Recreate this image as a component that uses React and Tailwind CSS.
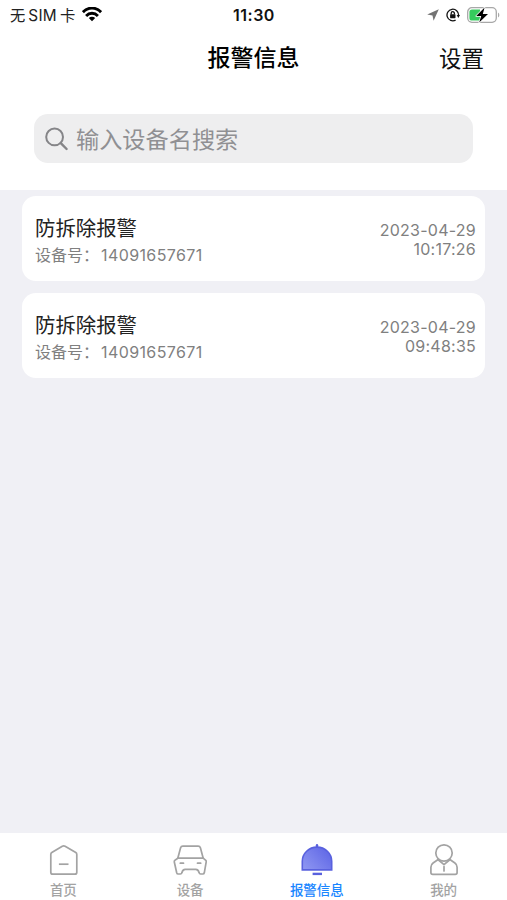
import React from 'react';
import { clsx } from 'clsx';

const WifiIcon = () => (
  <svg width="20" height="15" viewBox="0 0 20 15" fill="none" stroke="#000" strokeWidth="2.9">
    <path d="M0.9 5.2C6 -0.3 14 -0.3 19.1 5.2" />
    <path d="M4.1 8.9C7.4 5.4 12.6 5.4 15.9 8.9" />
    <path d="M6.8 11.1C8.7 9.3 11.3 9.3 13.2 11.1L10 14.3Z" fill="#000" stroke="none" />
  </svg>
);

const LocationIcon = () => (
  <svg width="12" height="12" viewBox="0 0 12 12" fill="#737373">
    <path d="M11.8 0.2L0.2 5.4L5.5 6.5L6.6 11.8Z" />
  </svg>
);

const RotationLockIcon = () => (
  <svg width="14" height="14" viewBox="0 0 14 14" fill="none" stroke="#111" strokeWidth="1.3">
    <path d="M9.6 12.1A5.8 5.8 0 1 1 12.6 7.2" />
    <path d="M10.7 7H14L12.3 9.9Z" fill="#111" stroke="none" />
    <rect x="4.1" y="6.2" width="5.4" height="4" rx="0.6" fill="#111" stroke="none" />
    <path d="M5.2 6.5V5.3A1.6 1.6 0 0 1 8.4 5.3V6.5" />
  </svg>
);

const BatteryIcon = () => (
  <svg width="33" height="18" viewBox="0 0 33 18">
    <rect x="0.7" y="1.7" width="28.6" height="14.6" rx="4.2" fill="#fff" stroke="#a8a8a8" strokeWidth="1.3" />
    <path d="M31 6.5C32.8 7.4 32.8 10.6 31 11.5Z" fill="#a8a8a8" />
    <path d="M5 3.4H13V14.6H5A2.6 2.6 0 0 1 2.4 12V6A2.6 2.6 0 0 1 5 3.4Z" fill="#35cb5d" />
    <path
      d="M17.6 1.6L9.2 10H14.2L12.2 16.6L21 8H15.8Z"
      fill="#000"
      stroke="#fff"
      strokeWidth="1.4"
      strokeLinejoin="round"
      paintOrder="stroke"
    />
  </svg>
);

const SearchIcon = () => (
  <svg width="24" height="24" viewBox="0 0 24 24" fill="none" stroke="#858588" strokeWidth="2" strokeLinecap="round">
    <circle cx="9.6" cy="9.9" r="8.4" />
    <path d="M15.8 16.1L21.6 22" strokeWidth="2.4" />
  </svg>
);

const HomeIcon = () => (
  <svg width="34" height="34" viewBox="0 0 34 34" fill="none" stroke="#a3a3a3" strokeWidth="1.7" strokeLinejoin="round">
    <path d="M16.3 3.2Q17.7 2.4 19.1 3.2L29.8 9.6Q30.8 10.2 30.8 11.5V29.2Q30.8 31.2 28.8 31.2H6.8Q4.8 31.2 4.8 29.2V11.5Q4.8 10.2 5.8 9.6Z" />
    <path d="M12.9 21.2H22.5" />
  </svg>
);

const CarIcon = () => (
  <svg width="34" height="34" viewBox="0 0 34 34" fill="none" stroke="#a3a3a3" strokeWidth="1.7" strokeLinejoin="round" strokeLinecap="round">
    <path d="M4.8 15.2L7.6 4.8Q8.1 3.2 9.8 3.2H25.2Q26.9 3.2 27.4 4.8L30.2 15.2Z" />
    <path d="M4.8 15.2L1.8 17.4Q1.2 18 1.3 19L3.7 29.8Q4 31 5.2 31H7.4Q8.5 31 8.9 29.8Q9.6 26.3 12.2 26.3H22.8Q25.4 26.3 26.1 29.8Q26.5 31 27.6 31H29.8Q31 31 31.3 29.8L33.2 19Q33.4 18 32.8 17.4L30.2 15.2" />
    <path d="M7.3 20.2H10.5M24.5 20.2H27.7" />
  </svg>
);

const BellIcon = () => (
  <svg width="34" height="34" viewBox="0 0 34 34" fill="none">
    <defs>
      <linearGradient id="bell" x1="4" y1="28" x2="28" y2="6" gradientUnits="userSpaceOnUse">
        <stop stopColor="#9098f2" />
        <stop offset="1" stopColor="#6068e6" />
      </linearGradient>
    </defs>
    <path d="M17 2.2V5" stroke="#5961de" strokeWidth="2.4" strokeLinecap="round" />
    <path d="M2.3 26.9V18.3A14.7 14.2 0 0 1 31.7 18.3V26.9Z" fill="url(#bell)" stroke="#5961de" strokeWidth="1.6" />
    <path d="M12.6 30.9H22" stroke="#5961de" strokeWidth="2.4" />
  </svg>
);

const UserIcon = () => (
  <svg width="34" height="34" viewBox="0 0 34 34" fill="none" stroke="#a3a3a3" strokeWidth="1.7" strokeLinejoin="round" strokeLinecap="round">
    <circle cx="17" cy="10" r="8.2" />
    <path d="M11.5 16.3L6.1 20Q3.9 21.6 3.9 24.2V29.4Q3.9 31.3 5.8 31.3H28.2Q30.1 31.3 30.1 29.4V24.2Q30.1 21.6 27.9 20L22.5 16.3" />
    <path d="M11.5 17L17 21.6L22.5 17M17 23.5V28" />
  </svg>
);

const alarms = [
  { id: 1, title: '防拆除报警', device: '14091657671', date: '2023-04-29', time: '10:17:26' },
  { id: 2, title: '防拆除报警', device: '14091657671', date: '2023-04-29', time: '09:48:35' }
];

const tabs = [
  { id: 'home', label: '首页', icon: HomeIcon },
  { id: 'devices', label: '设备', icon: CarIcon },
  { id: 'alarms', label: '报警信息', icon: BellIcon },
  { id: 'mine', label: '我的', icon: UserIcon }
];

const StatusBar = () => (
  <div className="grid h-[30px] grid-cols-3 items-center pr-[7px] pl-[10px]">
    <div className="flex items-center gap-[7px]">
      <span className="pt-px text-[15.3px] leading-none whitespace-nowrap text-[#222]">
        无<span className="mx-[3px] tracking-[0.3px]">SIM</span>卡
      </span>
      <WifiIcon />
    </div>
    <span className="pr-[2px] text-center text-[16px] font-semibold tracking-[0.5px] text-[#111]">11:30</span>
    <div className="flex items-center justify-end gap-[7px]">
      <LocationIcon />
      <RotationLockIcon />
      <BatteryIcon />
    </div>
  </div>
);

const AlarmCard = ({ alarm }) => (
  <div className="flex h-[85px] items-center justify-between rounded-[14px] bg-white pr-[9px] pl-[13px]">
    <div className="pt-[5px]">
      <p className="text-[20.4px] leading-[28px] text-[#222]">{alarm.title}</p>
      <p className="flex text-[16px] leading-[25px] text-[#808080]">
        <span className="w-[66px]">设备号：</span>
        <span className="tracking-[0.4px]">{alarm.device}</span>
      </p>
    </div>
    <div className="pt-[2px] text-right text-[16px] leading-[19px] tracking-[0.25px] text-[#808080]">
      <p>{alarm.date}</p>
      <p>{alarm.time}</p>
    </div>
  </div>
);

const App = () => {
  const activeTab = 'alarms';

  return (
    <div className="flex h-[900px] w-full flex-col bg-[#f0f0f5] font-['Inter','Noto_Sans_CJK_SC',sans-serif]">
      {/* Header */}
      <header className="h-[190px] bg-white">
        <StatusBar />
        <div className="grid h-[54px] grid-cols-[1fr_auto_1fr] items-center px-[23px] pt-[3px]">
          <h1 className="col-start-2 text-[23px] font-medium text-black">报警信息</h1>
          <button className="justify-self-end text-[22.5px] text-[#111]">设置</button>
        </div>
        <div className="mx-[34px] mt-[30px] flex h-[49px] items-center gap-[7px] rounded-[14px] bg-[#eeeeef] pl-[11px]">
          <SearchIcon />
          <span className="pt-[3px] text-[23.2px] text-[#909093]">输入设备名搜索</span>
        </div>
      </header>

      {/* Alarm list */}
      <main className="flex flex-1 flex-col gap-3 px-[22px] pt-[6px]">
        {alarms.map((alarm) => (
          <AlarmCard key={alarm.id} alarm={alarm} />
        ))}
      </main>

      {/* Tab bar */}
      <nav className="grid h-[67px] grid-cols-4 bg-white pt-[10px]">
        {tabs.map((tab) => {
          const Icon = tab.icon;
          return (
            <button key={tab.id} className="flex flex-col items-center">
              <Icon />
              <span
                className={clsx(
                  'mt-[4px] text-[13.5px] leading-[19px] font-medium',
                  tab.id === activeTab ? 'text-[#1a86ff]' : 'text-[#a3a3a3]'
                )}
              >
                {tab.label}
              </span>
            </button>
          );
        })}
      </nav>
    </div>
  );
};

export default App;
